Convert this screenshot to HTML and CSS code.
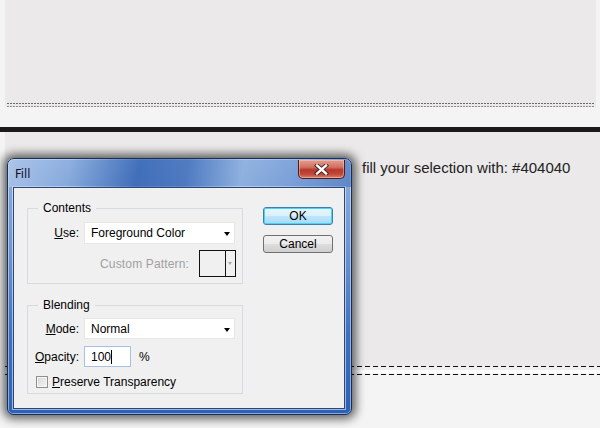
FILE: index.html
```html
<!DOCTYPE html>
<html>
<head>
<meta charset="utf-8">
<link rel="stylesheet" href="styles.css">
</head>
<body>
<div class="page">
  <div class="panel-top">
    <div class="dots"></div>
    <div class="dots dots-offset"></div>
  </div>
  <div class="spacer"></div>
  <div class="black-bar"></div>
  <div class="panel-main">
    <p class="hint">fill your selection with: #404040</p>
  </div>
  <div class="dash"></div>
  <div class="band"></div>
  <div class="dash"></div>
</div>

<div class="dialog">
  <div class="titlebar">
    <span class="title">Fill</span>
    <div class="close">
      <svg width="15" height="11" viewBox="0 0 15 11">
        <path d="M3 1.5 L12 9.5 M12 1.5 L3 9.5" stroke="#3a2020" stroke-width="4.2" stroke-linecap="square"/>
        <path d="M3 1.5 L12 9.5 M12 1.5 L3 9.5" stroke="#ffffff" stroke-width="2.4" stroke-linecap="square"/>
      </svg>
    </div>
  </div>
  <div class="client">
    <div class="groups">
      <fieldset class="group contents">
        <legend>Contents</legend>
        <div class="row">
          <span class="lbl"><u>U</u>se:</span>
          <div class="select">Foreground Color<span class="arrow"></span></div>
        </div>
        <div class="row row-end">
          <span class="lbl-disabled">Custom Pattern:</span>
          <div class="pattern"><span class="pattern-arrow"></span></div>
        </div>
      </fieldset>
      <fieldset class="group blending">
        <legend>Blending</legend>
        <div class="row">
          <span class="lbl"><u>M</u>ode:</span>
          <div class="select select-mode">Normal<span class="arrow"></span></div>
        </div>
        <div class="row row-opacity">
          <span class="lbl"><u>O</u>pacity:</span>
          <div class="input">100<span class="caret"></span></div>
          <span class="pct">%</span>
        </div>
        <div class="row row-check">
          <span class="checkbox"></span>
          <span class="check-lbl"><u>P</u>reserve Transparency</span>
        </div>
      </fieldset>
    </div>
    <div class="buttons">
      <div class="btn btn-ok">OK</div>
      <div class="btn">Cancel</div>
    </div>
  </div>
</div>
</body>
</html>
```

FILE: styles.css
```css
html, body {
  margin: 0;
  padding: 0;
}
body {
  background: #f4f4f4;
  font-family: "Liberation Sans", Arial, sans-serif;
  width: 600px;
  height: 428px;
  overflow: hidden;
  position: relative;
}
.page {
  display: flex;
  flex-direction: column;
}
.panel-top {
  height: 107px;
  margin: 0 4px 0 5px;
  background: #ebe9ea;
  display: flex;
  flex-direction: column;
  justify-content: flex-end;
  gap: 2px;
}
.dots {
  height: 1px;
  margin: 0 2px;
  background: repeating-linear-gradient(to right, #6a6a6a 0 2px, transparent 2px 3px);
}
.dots-offset {
  background: repeating-linear-gradient(to right, #8a8a8a 0 2px, transparent 2px 3px);
}
.spacer {
  height: 20px;
}
.black-bar {
  height: 5px;
  background: #1b1b1b;
}
.panel-main {
  height: 234px;
  margin: 0 0 0 5px;
  background: #ebe9ea;
  padding: 27px 0 0 357px;
  box-sizing: border-box;
}
.hint {
  margin: 0;
  font-size: 15px;
  line-height: 17px;
  color: #222;
}
.dash {
  height: 1px;
  margin-left: 5px;
  background: repeating-linear-gradient(to right, #111 0 5px, transparent 5px 8px);
}
.band {
  height: 7px;
  margin-left: 5px;
  background: linear-gradient(to bottom, #f0f0f0 0 3px, #ffffff 3px 6px, #f4f4f4 6px);
}

/* Dialog */
.dialog {
  position: absolute;
  left: 7px;
  top: 158px;
  width: 345px;
  height: 257px;
  box-sizing: border-box;
  border: 1px solid #1a2f55;
  border-radius: 7px 7px 6px 6px;
  background: linear-gradient(to bottom, #8fb0de 0%, #6e95d1 35%, #3d6fbf 70%, #2b61b6 100%);
  box-shadow: 0 0 10px 4px rgba(0, 0, 0, 0.6), inset 0 0 0 1px rgba(255, 255, 255, 0.45);
  display: flex;
  flex-direction: column;
}
.titlebar {
  height: 28px;
  position: relative;
  display: flex;
  align-items: center;
  padding-left: 7px;
  border-radius: 6px 6px 0 0;
  background: linear-gradient(100deg, rgba(190, 210, 240, 0.6) 0%, rgba(140, 175, 225, 0.3) 18%, rgba(35, 85, 172, 0.7) 38%, rgba(40, 90, 175, 0.6) 52%, rgba(150, 185, 230, 0.4) 68%, rgba(100, 140, 210, 0.3) 82%, rgba(55, 100, 182, 0.5) 100%);
}
.title {
  font-family: "DejaVu Sans", "Liberation Sans", sans-serif;
  font-size: 11.5px;
  color: #120a2a;
  margin-top: 1px;
}
.close {
  position: absolute;
  right: 6px;
  top: 1px;
  width: 47px;
  height: 19px;
  box-sizing: border-box;
  border: 1px solid #4a1e1a;
  border-top: none;
  border-radius: 0 0 5px 5px;
  background: linear-gradient(to bottom, #e3a090 0%, #d27060 40%, #b8352a 55%, #c24a3a 80%, #d9826a 100%);
  box-shadow: inset 0 0 0 1px rgba(255, 210, 200, 0.45);
  display: flex;
  align-items: center;
  justify-content: center;
}
.client {
  flex: 1;
  margin: 0 6px 5px 5px;
  background: #f0f0f0;
  border: 1px solid #2a4775;
  box-shadow: 0 0 0 1px rgba(255, 255, 255, 0.55);
  display: flex;
  padding: 13px 0 0 13px;
  font-size: 12px;
  color: #000;
}
.groups {
  width: 216px;
  display: flex;
  flex-direction: column;
}
.group {
  margin: 0;
  padding: 0 6px 0 0;
  border: 1px solid #d5dbe0;
  min-width: 0;
}
.group legend {
  margin-left: 10px;
  padding: 0 5px;
  font-size: 12px;
  line-height: 14px;
}
.contents {
  padding-top: 7px;
  padding-bottom: 6px;
}
.blending {
  margin-top: 14px;
  padding-top: 6px;
  padding-bottom: 4px;
}
.row {
  display: flex;
  align-items: center;
}
.row-end {
  justify-content: flex-end;
  margin-top: 6px;
  gap: 10px;
}
.lbl {
  width: 51px;
  text-align: right;
  margin-right: 5px;
}
.lbl-disabled {
  color: #a0a0a0;
  letter-spacing: 0.15px;
}
.select {
  position: relative;
  width: 151px;
  height: 22px;
  box-sizing: border-box;
  background: #fff;
  border: 1px solid #e6e6e6;
  padding-left: 6px;
  display: flex;
  align-items: center;
}
.select-mode {
  height: 21px;
}
.arrow {
  position: absolute;
  right: 4px;
  top: 9px;
  width: 0;
  height: 0;
  border-left: 3.5px solid transparent;
  border-right: 3.5px solid transparent;
  border-top: 4px solid #000;
}
.pattern {
  position: relative;
  width: 37px;
  height: 27px;
  box-sizing: border-box;
  border: 1px solid #111;
}
.pattern::after {
  content: "";
  position: absolute;
  left: 25px;
  top: 0;
  bottom: 0;
  width: 1px;
  background: #111;
}
.pattern-arrow {
  position: absolute;
  right: 3px;
  top: 11px;
  border-left: 2.5px solid transparent;
  border-right: 2.5px solid transparent;
  border-top: 3px solid #a8a8a8;
}
.row-opacity {
  margin-top: 7px;
}
.input {
  width: 47px;
  height: 21px;
  box-sizing: border-box;
  background: #fff;
  border: 1px solid #a9c1df;
  padding-left: 6px;
  display: flex;
  align-items: center;
}
.caret {
  display: inline-block;
  width: 1px;
  height: 14px;
  background: #000;
}
.pct {
  margin-left: 8px;
}
.row-check {
  margin-top: 8px;
  margin-left: 8px;
  height: 14px;
}
.checkbox {
  width: 12px;
  height: 12px;
  box-sizing: border-box;
  border: 1px solid #8e8f8f;
  background: linear-gradient(135deg, #d6d6d6, #f6f6f6);
  box-shadow: inset 0 0 0 1px #f4f4f4;
  margin-right: 4px;
}
.buttons {
  display: flex;
  flex-direction: column;
  gap: 10px;
  margin-left: 20px;
  margin-top: 6px;
}
.btn {
  width: 70px;
  height: 18px;
  box-sizing: border-box;
  border: 1px solid #707070;
  border-radius: 3px;
  background: linear-gradient(to bottom, #f2f2f2 0%, #ebebeb 50%, #dddddd 51%, #cfcfcf 100%);
  display: flex;
  align-items: center;
  justify-content: center;
  font-size: 12px;
  line-height: 14px;
}
.btn-ok {
  border-color: #3c7fb1;
  background: linear-gradient(to bottom, #eaf6fd 0%, #d9f0fc 50%, #bee6fd 51%, #a7d9f5 100%);
  box-shadow: inset 0 0 0 1px #48d4f8;
}
```
